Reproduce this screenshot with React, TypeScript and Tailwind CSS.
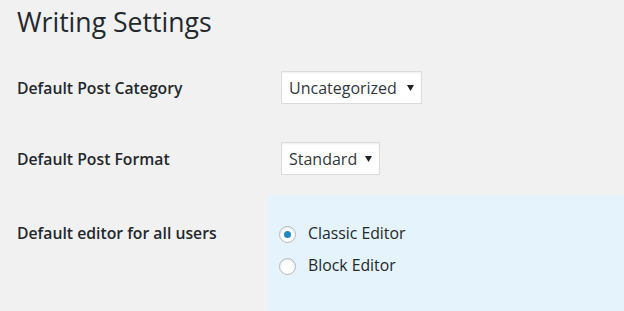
import React from "react";

// Writing Settings screen — WordPress admin style

function FakeSelect({ value, width }: { value: string; width: string }) {
  return (
    <div
      className={`${width} h-[33px] flex items-center justify-between pl-[7px] pr-[7px] bg-white border border-[#dcdcdc] shadow-[inset_0_1px_2px_rgba(0,0,0,0.07)] text-[16px] text-[#32373c]`}
    >
      <span>{value}</span>
      <svg width="7" height="6" viewBox="0 0 7 6" aria-hidden>
        <path d="M0 0 H7 L3.5 6 Z" fill="#1d2327" />
      </svg>
    </div>
  );
}

function Radio({ label, checked }: { label: string; checked?: boolean }) {
  return (
    <label className="flex items-center gap-[12px] h-[32px] text-[15.8px] text-[#23282d]">
      <span className="w-[17px] h-[17px] rounded-full bg-white border border-[#b4b9be] shadow-[inset_0_1px_2px_rgba(0,0,0,0.1)] flex items-center justify-center">
        {checked && <span className="w-[7px] h-[7px] rounded-full bg-[#1e8cbe]" />}
      </span>
      {label}
    </label>
  );
}

export default function App() {
  return (
    <div
      className="w-[624px] h-[311px] bg-[#f1f1f1] overflow-hidden text-[#23282d]"
      style={{ fontFamily: "'Open Sans', sans-serif" }}
    >
      <h1 className="h-[55px] pl-[17px] pt-[9px] text-[26.6px] leading-none font-normal">
        Writing Settings
      </h1>

      <div className="flex items-baseline pt-[16px] pb-[14px]">
        <div className="w-[268px] pl-[17px] text-[15.75px] font-semibold">Default Post Category</div>
        <div className="pl-[13px]">
          <FakeSelect value="Uncategorized" width="w-[141px]" />
        </div>
      </div>

      <div className="flex items-baseline pt-[24px] pb-[20px]">
        <div className="w-[268px] pl-[17px] text-[15.75px] font-semibold">Default Post Format</div>
        <div className="pl-[13px]">
          <FakeSelect value="Standard" width="w-[99px]" />
        </div>
      </div>

      <div className="flex">
        <div className="w-[268px] pl-[17px] pt-[27px] text-[15.75px] font-semibold">
          Default editor for all users
        </div>
        <div className="flex-1 h-[120px] bg-[#e5f3fc] pl-[11px] pt-[23px]">
          <Radio label="Classic Editor" checked />
          <Radio label="Block Editor" />
        </div>
      </div>
    </div>
  );
}
